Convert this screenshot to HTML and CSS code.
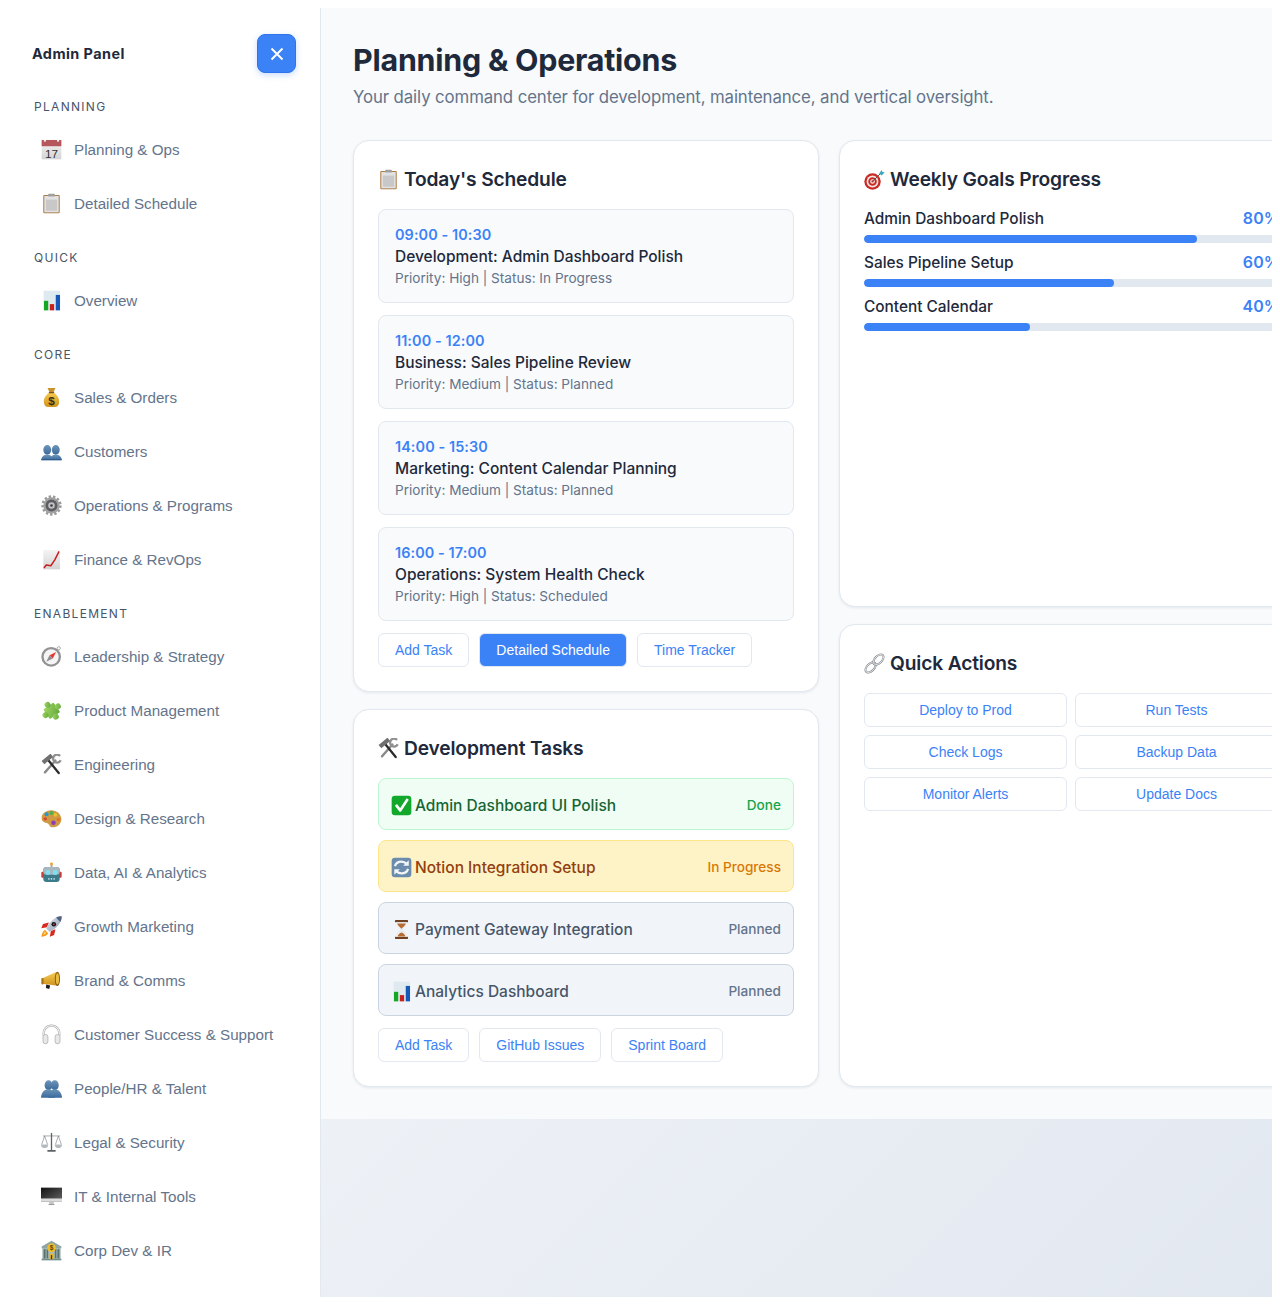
FILE: index.html
```html
<!DOCTYPE html>
<html lang="en">
<head>
<meta charset="utf-8">
<title>Planning &amp; Operations</title>
<link rel="stylesheet" href="styles.css">
</head>
<body>
<svg class="sprite" xmlns="http://www.w3.org/2000/svg" aria-hidden="true">
<defs>
<linearGradient id="g-paper" x1="0" y1="0" x2="0" y2="1"><stop offset="0" stop-color="#f4f4f4"/><stop offset="1" stop-color="#d4d4d4"/></linearGradient>
<linearGradient id="g-gold" x1="0" y1="0" x2="0" y2="1"><stop offset="0" stop-color="#f6cc52"/><stop offset="1" stop-color="#cf921f"/></linearGradient>
<linearGradient id="g-blue" x1="0" y1="0" x2="0" y2="1"><stop offset="0" stop-color="#6f95b8"/><stop offset="1" stop-color="#3a6a9c"/></linearGradient>
<linearGradient id="g-green" x1="0" y1="0" x2="1" y2="1"><stop offset="0" stop-color="#a4d665"/><stop offset="1" stop-color="#5fa83a"/></linearGradient>
<linearGradient id="g-screen" x1="0" y1="0" x2="1" y2="1"><stop offset="0" stop-color="#111"/><stop offset="1" stop-color="#666"/></linearGradient>
<linearGradient id="g-silver" x1="0" y1="0" x2="1" y2="1"><stop offset="0" stop-color="#dfe5ee"/><stop offset="1" stop-color="#8e9ab0"/></linearGradient>
<symbol id="i-cal" viewBox="0 0 64 64"><rect x="2" y="3" width="60" height="59" fill="url(#g-paper)"/><rect x="2" y="3" width="60" height="19" fill="#b5565c"/><circle cx="12" cy="5" r="3.5" fill="#f2f2f2"/><circle cx="52" cy="5" r="3.5" fill="#f2f2f2"/><text x="32" y="58" font-family="Liberation Sans" font-size="36" text-anchor="middle" fill="#333">17</text></symbol>
<symbol id="i-clip" viewBox="0 0 64 64"><rect x="7" y="6" width="50" height="56" rx="3" fill="#a87842"/><rect x="10" y="9" width="44" height="50" fill="#e2e2e2"/><rect x="15" y="20" width="34" height="34" fill="#c8c8c8"/><rect x="22" y="2" width="20" height="9" rx="2" fill="#a0a0a0"/></symbol>
<symbol id="i-bars" viewBox="0 0 64 64"><rect x="8" y="2" width="50" height="60" fill="#dfe9f0"/><rect x="9" y="33" width="13" height="29" fill="#14a822"/><rect x="27" y="43" width="13" height="19" fill="#c8201c"/><rect x="45" y="15" width="13" height="47" fill="#1558b8"/></symbol>
<symbol id="i-bag" viewBox="0 0 64 64"><path d="M20 3h24l-6 13H26z" fill="#c8922c"/><path d="M26 17h12c13 8 19 20 17 32-1 8-6 12-13 12H22c-7 0-12-4-13-12-2-12 4-24 17-32z" fill="url(#g-gold)"/><rect x="24" y="15" width="16" height="4" fill="#7a5518"/><text x="32" y="54" font-family="Liberation Sans" font-weight="700" font-size="36" text-anchor="middle" fill="#3f2d0c">$</text></symbol>
<symbol id="i-people" viewBox="0 0 64 64"><g fill="url(#g-blue)"><ellipse cx="19" cy="27" rx="12" ry="15"/><ellipse cx="45" cy="27" rx="12" ry="15"/><path d="M1 58c0-10 7-16 18-16s17 6 17 16z"/><path d="M28 58c0-10 6-16 17-16s18 6 18 16z"/></g><rect x="1" y="55" width="62" height="4" fill="#2f5d8c"/></symbol>
<symbol id="i-gear" viewBox="0 0 64 64"><circle cx="32" cy="32" r="26" fill="none" stroke="#9a9a9a" stroke-width="10" stroke-dasharray="7 5.6"/><circle cx="32" cy="32" r="25" fill="#a2a2a2"/><circle cx="32" cy="32" r="18" fill="#5c5d62"/><circle cx="32" cy="32" r="10" fill="#c2c2c6"/><circle cx="32" cy="32" r="4" fill="#3c3c40"/></symbol>
<symbol id="i-trend" viewBox="0 0 64 64"><rect x="7" y="3" width="51" height="59" fill="url(#g-paper)"/><path d="M9 58l7-9 14 2L42 33l13-26" fill="none" stroke="#c81e1e" stroke-width="4.5" stroke-linejoin="round"/></symbol>
<symbol id="i-compass" viewBox="0 0 64 64"><circle cx="54" cy="7" r="5" fill="none" stroke="#9a9a9a" stroke-width="2.5"/><circle cx="31" cy="33" r="30" fill="#929292"/><circle cx="31" cy="33" r="23" fill="#f5f5f5"/><path d="M46 18L36 38l-10-10z" fill="#e8392e"/><path d="M16 48l10-20 10 10z" fill="#8f8f8f"/></symbol>
<symbol id="i-puzzle" viewBox="0 0 64 64"><g transform="rotate(-35 32 32)" fill="url(#g-green)"><rect x="13" y="15" width="38" height="36" rx="3"/><circle cx="32" cy="11" r="9"/><circle cx="55" cy="33" r="9"/><circle cx="32" cy="55" r="9"/><circle cx="9" cy="33" r="9"/></g></symbol>
<symbol id="i-tools" viewBox="0 0 64 64"><path d="M12 56L44 20" stroke="#8a8a8a" stroke-width="7" stroke-linecap="round"/><path d="M58 6A12 12 0 1 0 60 19" fill="none" stroke="#8f8f8f" stroke-width="7"/><path d="M54 58L20 16" stroke="#2c2c2c" stroke-width="7" stroke-linecap="round"/><path d="M6 26L33 4" stroke="#707070" stroke-width="13"/></symbol>
<symbol id="i-palette" viewBox="0 0 64 64"><path d="M31 7C14 7 1 18 2 32c1 14 15 12 20 16 4 4 5 11 13 11 14 0 27-10 27-25C62 19 48 7 31 7z" fill="#cf9a44"/><circle cx="17" cy="19" r="6" fill="#1f9ad6"/><circle cx="32" cy="15" r="6" fill="#4cb050"/><circle cx="13" cy="33" r="5" fill="#d9462f"/><circle cx="44" cy="21" r="5.5" fill="#e8c32e"/><circle cx="53" cy="35" r="5" fill="#ec6b2d"/><circle cx="38" cy="45" r="7" fill="#8c3fb8"/></symbol>
<symbol id="i-robot" viewBox="0 0 64 64"><circle cx="32" cy="6" r="4.5" fill="#f0a030"/><rect x="29" y="9" width="6" height="7" fill="#aaa"/><rect x="1" y="30" width="9" height="18" rx="3" fill="#c83e38"/><rect x="54" y="30" width="9" height="18" rx="3" fill="#c83e38"/><rect x="7" y="15" width="50" height="46" rx="10" fill="#3b7c8c"/><rect x="7" y="15" width="50" height="24" rx="10" fill="#a8b8be"/><circle cx="21" cy="32" r="7.5" fill="#7fe0f0"/><circle cx="43" cy="32" r="7.5" fill="#7fe0f0"/><rect x="22" y="49" width="4" height="5" fill="#cfdfe2"/><rect x="30" y="49" width="4" height="5" fill="#cfdfe2"/><rect x="38" y="49" width="4" height="5" fill="#cfdfe2"/></symbol>
<symbol id="i-rocket" viewBox="0 0 64 64"><path d="M12 42C5 47 2 56 1 63c8-1 16-3 21-10z" fill="#f59a18"/><path d="M12 48c-3 3-4 7-5 9 3-1 6-2 8-5z" fill="#ffe28a"/><path d="M24 20L6 24 1 37l17-3z" fill="#d62a1e"/><path d="M44 40l-4 18-13 5 3-17z" fill="#d62a1e"/><path d="M63 1C47 1 32 11 21 30l-5 8 10 10 8-4C53 33 63 18 63 1z" fill="url(#g-silver)"/><path d="M63 1c-6 0-12 1-17 4l13 13c3-5 4-11 4-17z" fill="#4f6080"/><circle cx="39" cy="25" r="7" fill="#14141c"/><circle cx="39" cy="25" r="3" fill="#c8332a"/></symbol>
<symbol id="i-mega" viewBox="0 0 64 64"><path d="M3 26L46 6c7 8 11 26 6 42L4 42z" fill="url(#g-gold)"/><ellipse cx="50" cy="27" rx="8" ry="22" fill="#8a5a10"/><ellipse cx="50" cy="27" rx="5" ry="17" fill="#e9bb3f"/><rect x="1" y="24" width="7" height="20" rx="3" fill="#a87418"/><path d="M16 44l12 3-3 11-10-3z" fill="#1a1a1a"/></symbol>
<symbol id="i-phones" viewBox="0 0 64 64"><path d="M9 36C5 15 18 5 32 5s27 10 23 31" fill="none" stroke="#a8a8a8" stroke-width="7"/><path d="M9 36C5 15 18 5 32 5s27 10 23 31" fill="none" stroke="#ededed" stroke-width="4"/><rect x="6" y="32" width="15" height="28" rx="7" fill="#e8e8e8" stroke="#a2a2a2" stroke-width="2"/><rect x="43" y="32" width="15" height="28" rx="7" fill="#e8e8e8" stroke="#a2a2a2" stroke-width="2"/></symbol>
<symbol id="i-busts" viewBox="0 0 64 64"><g fill="url(#g-blue)"><ellipse cx="23" cy="22" rx="12" ry="15"/><ellipse cx="42" cy="22" rx="12" ry="15"/><path d="M0 60c0-13 8-26 22-26s20 13 20 26z"/><path d="M22 60c0-13 7-26 20-26s22 13 22 26z"/></g></symbol>
<symbol id="i-scale" viewBox="0 0 64 64"><g fill="none" stroke="#7b8387" stroke-width="2"><path d="M6 12h52M11 12L2 38M11 12l9 26M53 12l-9 26M53 12l9 26"/></g><rect x="30" y="3" width="4" height="53" fill="#5c6468"/><path d="M0 38h22c0 8-5 11-11 11S0 46 0 38zM42 38h22c0 8-5 11-11 11s-11-3-11-11z" fill="#b4babd"/><rect x="19" y="55" width="26" height="5" rx="2" fill="#5c6468"/></symbol>
<symbol id="i-monitor" viewBox="0 0 64 64"><rect x="0" y="5" width="64" height="42" fill="url(#g-screen)"/><rect x="0" y="38" width="64" height="9" fill="#dcdcdc"/><rect x="25" y="47" width="14" height="9" fill="#c4c4c4"/><rect x="23" y="55" width="18" height="3" fill="#9a9a9a"/></symbol>
<symbol id="i-bank" viewBox="0 0 64 64"><rect x="4" y="24" width="56" height="36" fill="#a9bcb8"/><path d="M32 2L2 20v5h60v-5z" fill="#8fa6a3"/><g fill="#56716e"><rect x="8" y="28" width="6" height="28"/><rect x="17" y="28" width="5" height="28"/><rect x="42" y="28" width="5" height="28"/><rect x="50" y="28" width="6" height="28"/></g><rect x="2" y="57" width="60" height="5" fill="#738c89"/><circle cx="32" cy="24" r="13" fill="#eebd2c"/><text x="32" y="31" font-family="Liberation Sans" font-weight="700" font-size="20" text-anchor="middle" fill="#5a430c">$</text><rect x="24" y="42" width="16" height="16" fill="#e4b62c"/><rect x="30" y="46" width="4" height="12" fill="#334"/></symbol>
<symbol id="i-target" viewBox="0 0 64 64"><circle cx="26" cy="38" r="25" fill="#c92a25"/><circle cx="26" cy="38" r="18" fill="#f3e9e4"/><circle cx="26" cy="38" r="13" fill="#c92a25"/><circle cx="26" cy="38" r="7" fill="#f3e9e4"/><circle cx="26" cy="38" r="3.5" fill="#c92a25"/><path d="M26 38L52 12" stroke="#555" stroke-width="3"/><path d="M46 14l8-11 2 6 7 1-9 10z" fill="#3aa8b8"/></symbol>
<symbol id="i-link" viewBox="0 0 64 64"><g fill="none"><g transform="rotate(-45 20 44)"><ellipse cx="20" cy="44" rx="19" ry="11" stroke="#858b91" stroke-width="6"/><ellipse cx="20" cy="44" rx="19" ry="11" stroke="#eceef0" stroke-width="2.5"/></g><g transform="rotate(-45 44 20)"><ellipse cx="44" cy="20" rx="19" ry="11" stroke="#858b91" stroke-width="6"/><ellipse cx="44" cy="20" rx="19" ry="11" stroke="#eceef0" stroke-width="2.5"/></g></g></symbol>
<symbol id="i-check" viewBox="0 0 64 64"><rect x="2" y="2" width="60" height="60" rx="10" fill="#12a82c"/><path d="M15 30l13 17 23-35" fill="none" stroke="#fff" stroke-width="8" stroke-linejoin="round"/></symbol>
<symbol id="i-sync" viewBox="0 0 64 64"><rect x="2" y="2" width="60" height="60" rx="10" fill="#6b8cac"/><g fill="none" stroke="#f2f5f8" stroke-width="7"><path d="M12 28c3-10 11-14 20-14 7 0 12 3 16 7"/><path d="M52 36c-3 10-11 14-20 14-7 0-12-3-16-7"/></g><path d="M54 10v17H37z" fill="#f2f5f8"/><path d="M10 54V37h17z" fill="#f2f5f8"/></symbol>
<symbol id="i-hour" viewBox="0 0 64 64"><rect x="12" y="3" width="40" height="7" rx="2" fill="#6e4222"/><rect x="12" y="54" width="40" height="7" rx="2" fill="#6e4222"/><path d="M16 10h32c0 14-12 18-12 22s12 8 12 22H16c0-14 12-18 12-22S16 24 16 10z" fill="#e8ecee"/><path d="M19 14h26c-2 8-10 12-13 16-3-4-11-8-13-16z" fill="#b86c34"/><path d="M20 53c2-7 8-10 12-12 4 2 10 5 12 12z" fill="#b86c34"/></symbol>
</defs>
</svg>
<div class="app">
  <aside class="sidebar">
    <div class="sidebar-head">
      <h2 class="brand">Admin Panel</h2>
      <button class="close" type="button" aria-label="Close"><svg class="close-icon" viewBox="0 0 14 14"><path d="M1.5 1.5l11 11M12.5 1.5l-11 11"/></svg></button>
    </div>
    <nav>
      <div class="nav-label nav-label-first">PLANNING</div>
      <a class="nav-item"><svg class="emoji"><use href="#i-cal"/></svg>Planning &amp; Ops</a>
      <a class="nav-item"><svg class="emoji"><use href="#i-clip"/></svg>Detailed Schedule</a>
      <div class="nav-label">QUICK</div>
      <a class="nav-item"><svg class="emoji"><use href="#i-bars"/></svg>Overview</a>
      <div class="nav-label">CORE</div>
      <a class="nav-item"><svg class="emoji"><use href="#i-bag"/></svg>Sales &amp; Orders</a>
      <a class="nav-item"><svg class="emoji"><use href="#i-people"/></svg>Customers</a>
      <a class="nav-item"><svg class="emoji"><use href="#i-gear"/></svg>Operations &amp; Programs</a>
      <a class="nav-item"><svg class="emoji"><use href="#i-trend"/></svg>Finance &amp; RevOps</a>
      <div class="nav-label">ENABLEMENT</div>
      <a class="nav-item"><svg class="emoji"><use href="#i-compass"/></svg>Leadership &amp; Strategy</a>
      <a class="nav-item"><svg class="emoji"><use href="#i-puzzle"/></svg>Product Management</a>
      <a class="nav-item"><svg class="emoji"><use href="#i-tools"/></svg>Engineering</a>
      <a class="nav-item"><svg class="emoji"><use href="#i-palette"/></svg>Design &amp; Research</a>
      <a class="nav-item"><svg class="emoji"><use href="#i-robot"/></svg>Data, AI &amp; Analytics</a>
      <a class="nav-item"><svg class="emoji"><use href="#i-rocket"/></svg>Growth Marketing</a>
      <a class="nav-item"><svg class="emoji"><use href="#i-mega"/></svg>Brand &amp; Comms</a>
      <a class="nav-item"><svg class="emoji"><use href="#i-phones"/></svg>Customer Success &amp; Support</a>
      <a class="nav-item"><svg class="emoji"><use href="#i-busts"/></svg>People/HR &amp; Talent</a>
      <a class="nav-item"><svg class="emoji"><use href="#i-scale"/></svg>Legal &amp; Security</a>
      <a class="nav-item"><svg class="emoji"><use href="#i-monitor"/></svg>IT &amp; Internal Tools</a>
      <a class="nav-item"><svg class="emoji"><use href="#i-bank"/></svg>Corp Dev &amp; IR</a>
    </nav>
  </aside>
  <div class="workspace">
    <main class="main">
      <h1 class="page-title">Planning &amp; Operations</h1>
      <p class="page-sub">Your daily command center for development, maintenance, and vertical oversight.</p>
      <div class="columns">
        <div class="column">
          <section class="card">
            <h3 class="card-title"><svg class="emoji"><use href="#i-clip"/></svg>Today's Schedule</h3>
            <div class="sched-list">
              <div class="sched"><div class="sched-time">09:00 - 10:30</div><div class="sched-name">Development: Admin Dashboard Polish</div><div class="sched-meta">Priority: High | Status: In Progress</div></div>
              <div class="sched"><div class="sched-time">11:00 - 12:00</div><div class="sched-name">Business: Sales Pipeline Review</div><div class="sched-meta">Priority: Medium | Status: Planned</div></div>
              <div class="sched"><div class="sched-time">14:00 - 15:30</div><div class="sched-name">Marketing: Content Calendar Planning</div><div class="sched-meta">Priority: Medium | Status: Planned</div></div>
              <div class="sched"><div class="sched-time">16:00 - 17:00</div><div class="sched-name">Operations: System Health Check</div><div class="sched-meta">Priority: High | Status: Scheduled</div></div>
            </div>
            <div class="btn-row">
              <a class="btn">Add Task</a>
              <a class="btn btn-primary">Detailed Schedule</a>
              <a class="btn">Time Tracker</a>
            </div>
          </section>
          <section class="card">
            <h3 class="card-title"><svg class="emoji"><use href="#i-tools"/></svg>Development Tasks</h3>
            <div class="task-list">
              <div class="task task-done"><span class="task-name"><svg class="emoji"><use href="#i-check"/></svg>Admin Dashboard UI Polish</span><span class="task-status">Done</span></div>
              <div class="task task-progress"><span class="task-name"><svg class="emoji"><use href="#i-sync"/></svg>Notion Integration Setup</span><span class="task-status">In Progress</span></div>
              <div class="task task-planned"><span class="task-name"><svg class="emoji"><use href="#i-hour"/></svg>Payment Gateway Integration</span><span class="task-status">Planned</span></div>
              <div class="task task-planned"><span class="task-name"><svg class="emoji"><use href="#i-bars"/></svg>Analytics Dashboard</span><span class="task-status">Planned</span></div>
            </div>
            <div class="btn-row">
              <a class="btn">Add Task</a>
              <a class="btn">GitHub Issues</a>
              <a class="btn">Sprint Board</a>
            </div>
          </section>
        </div>
        <div class="column">
          <section class="card card-goals">
            <h3 class="card-title"><svg class="emoji"><use href="#i-target"/></svg>Weekly Goals Progress</h3>
            <div class="goal"><div class="goal-head"><span>Admin Dashboard Polish</span><span class="goal-pct">80%</span></div><div class="track"><div class="fill" style="width:80%"></div></div></div>
            <div class="goal"><div class="goal-head"><span>Sales Pipeline Setup</span><span class="goal-pct">60%</span></div><div class="track"><div class="fill" style="width:60%"></div></div></div>
            <div class="goal"><div class="goal-head"><span>Content Calendar</span><span class="goal-pct">40%</span></div><div class="track"><div class="fill" style="width:40%"></div></div></div>
          </section>
          <section class="card card-actions">
            <h3 class="card-title"><svg class="emoji"><use href="#i-link"/></svg>Quick Actions</h3>
            <div class="actions">
              <a class="btn">Deploy to Prod</a>
              <a class="btn">Run Tests</a>
              <a class="btn">Check Logs</a>
              <a class="btn">Backup Data</a>
              <a class="btn">Monitor Alerts</a>
              <a class="btn">Update Docs</a>
            </div>
          </section>
        </div>
      </div>
    </main>
  </div>
</div>
</body>
</html>
```
FILE: styles.css
```css
* { box-sizing: border-box; }
html, body { height: 100%; }
body {
  margin: 8px;
  height: calc(100vh - 16px);
  background: #fff;
  color: #1e293b;
  font-family: "Inter", "Liberation Sans", sans-serif;
}
.sprite { position: absolute; width: 0; height: 0; overflow: hidden; }
.app { display: flex; height: 100%; overflow: hidden; }
.sidebar {
  flex: 0 0 313px;
  background: #fff;
  border-right: 1px solid #e2e8f0;
  padding: 26px 24px 0;
}
.sidebar-head { display: flex; align-items: center; justify-content: space-between; }
.brand { margin: 0; font-size: 14.4px; font-weight: 700; letter-spacing: 0.45px; color: #1e293b; }
.close {
  width: 39px;
  height: 39px;
  padding: 0;
  display: flex;
  align-items: center;
  justify-content: center;
  background: #3b82f6;
  border: 1px solid #2f74ea;
  border-radius: 8px;
  box-shadow: 0 2px 6px rgba(59, 130, 246, 0.28);
}
.close-icon { width: 14px; height: 14px; fill: none; stroke: #fff; stroke-width: 1.9; }
.nav-label {
  margin: 19px 0 8px 2px;
  height: 16px;
  line-height: 16px;
  font-size: 12px;
  font-weight: 400;
  letter-spacing: 1.3px;
  color: #475569;
}
.nav-label-first { margin-top: 26px; }
.nav-item {
  display: flex;
  align-items: center;
  height: 54px;
  padding: 0 0 2px 9px;
  font-family: "Liberation Sans", Arial, sans-serif;
  font-size: 15.2px;
  color: #64748b;
}
.nav-item .emoji { margin-right: 12px; }
.emoji { flex: none; width: 21px; height: 21px; }
.workspace {
  flex: 1;
  min-width: 0;
  overflow: hidden;
  background: linear-gradient(135deg, #f8fafc, #e2e8f0);
}
.main { background: #f8fafc; padding: 32px; width: 1016px; }
.page-title { margin: 0; font-size: 30.4px; line-height: 40px; font-weight: 700; letter-spacing: -0.23px; color: #1e293b; }
.page-sub { margin: 6px 0 0; font-size: 16.8px; line-height: 22px; letter-spacing: -0.1px; color: #64748b; }
.columns { display: flex; gap: 20px; margin-top: 32px; }
.column { flex: 0 0 466px; display: flex; flex-direction: column; gap: 17px; }
.card {
  background: #fff;
  border: 1px solid #e2e8f0;
  border-radius: 16px;
  padding: 24px;
  box-shadow: 0 1px 3px rgba(15, 23, 42, 0.08);
}
.card-goals { flex: 0 0 467px; }
.card-actions { flex: 1; }
.card-title {
  display: flex;
  align-items: center;
  gap: 5px;
  margin: 0 0 16px;
  height: 28px;
  font-size: 19.2px;
  font-weight: 600;
  letter-spacing: -0.15px;
  color: #1e293b;
}
.sched-list { display: flex; flex-direction: column; gap: 12px; }
.sched {
  height: 94px;
  padding: 15px 16px 0;
  background: #f8fafc;
  border: 1px solid #e2e8f0;
  border-radius: 8px;
}
.sched-time { margin-bottom: 1px; font-size: 14.4px; line-height: 20px; font-weight: 600; letter-spacing: 0.1px; color: #3b82f6; }
.sched-name { font-size: 15.5px; line-height: 21px; font-weight: 500; color: #1e293b; }
.sched-meta { font-size: 13.6px; line-height: 22px; color: #64748b; }
.btn-row { display: flex; gap: 10px; margin-top: 12px; }
.btn {
  display: flex;
  align-items: center;
  justify-content: center;
  height: 34px;
  padding: 0 16px;
  background: #fff;
  border: 1px solid #e2e8f0;
  border-radius: 6px;
  font-family: "Liberation Sans", Arial, sans-serif;
  font-size: 14px;
  color: #3b82f6;
}
.btn-primary { background: #3b82f6; color: #fff; }
.goal { margin-bottom: 10px; }
.goal-head { display: flex; justify-content: space-between; height: 19px; line-height: 19px; font-size: 15.4px; font-weight: 500; color: #1e293b; }
.goal-pct { font-size: 16px; font-weight: 600; letter-spacing: 0.1px; color: #3b82f6; }
.track { margin-top: 7px; height: 8px; border-radius: 4px; background: #e2e8f0; overflow: hidden; }
.fill { height: 100%; border-radius: 4px; background: #3b82f6; }
.task-list { display: flex; flex-direction: column; gap: 10px; }
.task {
  display: flex;
  align-items: center;
  justify-content: space-between;
  height: 52px;
  padding: 1px 12px 0;
  border: 1px solid;
  border-radius: 8px;
}
.task-name { display: flex; align-items: center; gap: 3px; margin-top: 2px; font-size: 15.5px; font-weight: 500; }
.task-status { font-size: 13.6px; font-weight: 500; }
.task-done { background: #f0fdf4; border-color: #bbf7d0; }
.task-done .task-name { color: #166534; }
.task-done .task-status { color: #16a34a; }
.task-progress { background: #fef3c7; border-color: #fde68a; }
.task-progress .task-name { color: #92400e; }
.task-progress .task-status { color: #d97706; }
.task-planned { background: #f1f5f9; border-color: #cbd5e1; }
.task-planned .task-name { color: #475569; }
.task-planned .task-status { color: #64748b; }
.actions { display: grid; grid-template-columns: 203px 203px; gap: 8px; }
```
